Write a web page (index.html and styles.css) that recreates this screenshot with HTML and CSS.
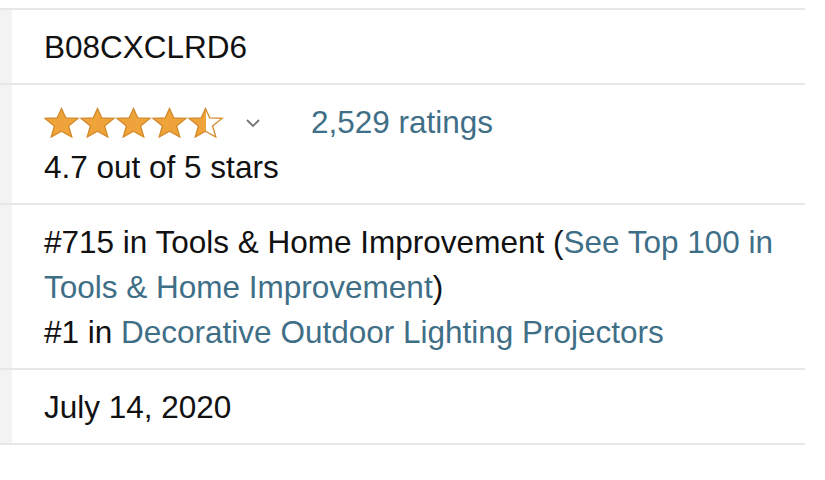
FILE: index.html
```html
<!DOCTYPE html>
<html>
<head>
<meta charset="utf-8">
<link rel="stylesheet" href="styles.css">
</head>
<body>
<table class="details">
  <tr>
    <th class="label"></th>
    <td class="value">B08CXCLRD6</td>
  </tr>
  <tr>
    <th class="label"></th>
    <td class="value">
      <div class="rating-line">
        <svg class="stars" width="180" height="31" viewBox="0 0 180 31" aria-hidden="true">
          <defs>
            <linearGradient id="half" x1="0" x2="1" y1="0" y2="0">
              <stop offset="0.5" stop-color="#eea43a"/>
              <stop offset="0.5" stop-color="#ffffff"/>
            </linearGradient>
            <path id="star" d="M17.5 1.5 L21.7 10.8 L34 11.4 L24.6 19 L27.8 30 L17.5 24.2 L7.2 30 L10.4 19 L1 11.4 L13.3 10.8 Z"/>
          </defs>
          <use href="#star" x="0" class="full"/>
          <use href="#star" x="36" class="full"/>
          <use href="#star" x="72" class="full"/>
          <use href="#star" x="108" class="full"/>
          <use href="#star" x="144" class="halfstar"/>
        </svg>
        <svg class="chev" width="16" height="10" viewBox="0 0 16 10" aria-hidden="true">
          <path d="M2 2 L8 8 L14 2" fill="none" stroke="#767676" stroke-width="1.8"/>
        </svg>
        <a class="link count" href="#">2,529 ratings</a>
      </div>
      <div>4.7 out of 5 stars</div>
    </td>
  </tr>
  <tr>
    <th class="label"></th>
    <td class="value">
      <div>#715 in Tools &amp; Home Improvement (<a class="link" href="#">See Top 100 in Tools &amp; Home Improvement</a>)</div>
      <div>#1 in <a class="link" href="#">Decorative Outdoor Lighting Projectors</a></div>
    </td>
  </tr>
  <tr>
    <th class="label"></th>
    <td class="value">July 14, 2020</td>
  </tr>
</table>
</body>
</html>
```
FILE: styles.css
```css
html, body {
  margin: 0;
  padding: 0;
  background: #ffffff;
}
body {
  padding-top: 8px;
  font-family: "Liberation Sans", Arial, sans-serif;
  font-size: 31.5px;
  line-height: 45px;
  color: #111111;
}
.details {
  border-collapse: collapse;
  width: 805px;
}
.details tr {
  border-top: 2px solid #e7e7e7;
}
.details tr:last-child {
  border-bottom: 2px solid #e7e7e7;
}
.label {
  width: 12px;
  padding: 0;
  background: #f3f3f3;
}
.value {
  padding: 15px 20px 13px 32px;
  text-align: left;
  vertical-align: top;
}
.link {
  color: #3f6f87;
  text-decoration: none;
}
.rating-line {
  display: flex;
  align-items: center;
  height: 45px;
}
.stars {
  display: block;
}
.stars .full {
  fill: #eea43a;
  stroke: #d3892a;
  stroke-width: 1.3;
}
.stars .halfstar {
  fill: url(#half);
  stroke: #d3892a;
  stroke-width: 1.3;
}
.chev {
  display: block;
  margin-left: 21px;
}
.count {
  margin-left: 50px;
}
```
